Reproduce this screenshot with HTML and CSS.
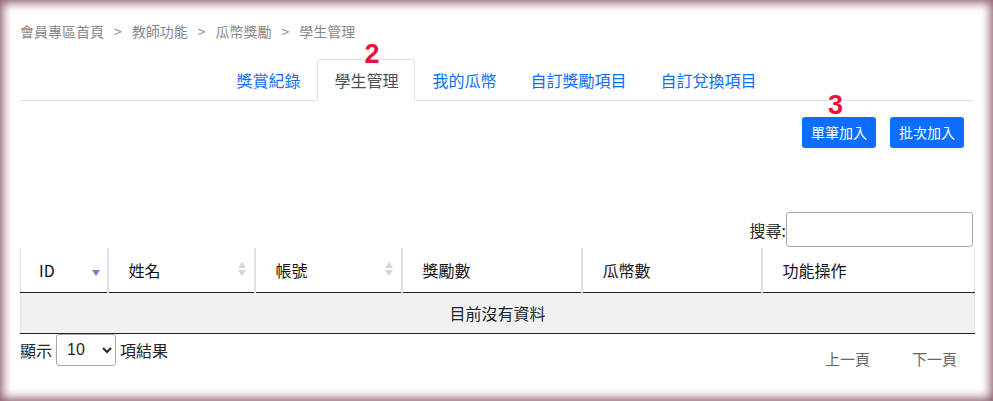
FILE: index.html
```html
<!DOCTYPE html>
<html lang="zh-Hant">
<head>
    <meta charset="UTF-8">
    <title>學生管理</title>
    <link rel="stylesheet" href="styles.css">
</head>
<body>

<div class="frame">
    <!-- Breadcrumb -->
    <div class="breadcrumb">
        <span>會員專區首頁</span><span class="sep">&gt;</span>
        <span>教師功能</span><span class="sep">&gt;</span>
        <span>瓜幣獎勵</span><span class="sep">&gt;</span>
        <span>學生管理</span>
    </div>

    <!-- Tabs -->
    <div class="tabs">
        <a class="tab">獎賞紀錄</a>
        <a class="tab active">學生管理<span class="mark mark-2">2</span></a>
        <a class="tab">我的瓜幣</a>
        <a class="tab">自訂獎勵項目</a>
        <a class="tab">自訂兌換項目</a>
    </div>

    <div class="actions">
        <button class="btn">單筆加入<span class="mark mark-3">3</span></button>
        <button class="btn">批次加入</button>
    </div>

    <!-- Search -->
    <div class="search">
        <label>搜尋:</label>
        <input type="text">
    </div>

    <table class="grid">
        <thead>
            <tr>
                <th class="c-id sort-desc">ID</th>
                <th class="c-name sortable">姓名</th>
                <th class="c-acc sortable">帳號</th>
                <th class="c-reward">獎勵數</th>
                <th class="c-coin">瓜幣數</th>
                <th class="c-op">功能操作</th>
            </tr>
        </thead>
        <tbody>
            <tr>
                <td colspan="6" class="empty">目前沒有資料</td>
            </tr>
        </tbody>
    </table>

    <div class="footer">
        <div class="length">
            顯示
            <select>
                <option>10</option>
                <option>25</option>
                <option>50</option>
            </select>
            項結果
        </div>
        <div class="pager">
            <span>上一頁</span>
            <span>下一頁</span>
        </div>
    </div>
</div>

</body>
</html>
```

FILE: styles.css
```css
body {
    margin: 0;
    padding: 0;
    font-family: "Noto Sans CJK TC", "Liberation Sans", sans-serif;
    color: #212529;
    background: #fff;
}
.frame {
    height: 401px;
    box-sizing: border-box;
    padding: 21px 18px 0 20px;
    box-shadow: inset 0 0 10px 3px rgba(110, 45, 70, 0.75);
    overflow: hidden;
}
.breadcrumb {
    font-size: 14px;
    line-height: 20px;
    color: #888;
    display: flex;
}
.breadcrumb .sep {
    padding: 0 10px;
}
.tabs {
    margin-top: 18px;
    display: flex;
    justify-content: center;
    border-bottom: 1px solid #dee2e6;
    margin-right: 2px;
}
.tab {
    position: relative;
    font-size: 16px;
    line-height: 24px;
    padding: 8px 16px;
    color: #0d6efd;
    border: 1px solid transparent;
    border-radius: 4px 4px 0 0;
    margin-bottom: -1px;
}
.tab.active {
    color: #495057;
    border-color: #dee2e6 #dee2e6 #fff;
    background: #fff;
}
.mark {
    position: absolute;
    font-family: "Liberation Sans", sans-serif;
    font-weight: bold;
    font-size: 27px;
    line-height: 26px;
    color: #f0103c;
}
.mark-2 {
    left: 46px;
    top: -19px;
}
.mark-3 {
    left: 26px;
    top: -25px;
}
.actions {
    margin-top: 16px;
    display: flex;
    justify-content: flex-end;
    gap: 14px;
    padding-right: 11px;
}
.btn {
    position: relative;
    background: #0d6efd;
    color: #fff;
    border: none;
    border-radius: 3px;
    font-family: inherit;
    font-size: 14px;
    line-height: 21px;
    padding: 5px 9px;
    width: 74px;
}
.search {
    margin-top: 64px;
    display: flex;
    justify-content: flex-end;
    align-items: center;
    font-size: 16px;
    padding-right: 2px;
}
.search input {
    width: 187px;
    height: 35px;
    box-sizing: border-box;
    border: 1px solid #aaa;
    border-radius: 3px;
    margin: 0;
}
.grid {
    width: 955px;
    border-collapse: collapse;
    margin-top: 1px;
    font-size: 16px;
}
.grid th {
    text-align: left;
    font-weight: 400;
    color: #111;
    height: 44px;
    padding: 0 18px 0 20px;
    border-left: 2px solid #dee2e6;
    border-bottom: 1px solid #222;
    position: relative;
    box-sizing: border-box;
}
.grid th:first-child {
    padding-left: 18px;
    border-left: 1px solid #dee2e6;
}
.grid th:last-child {
    border-right: 1px solid #dee2e6;
}
.c-id { width: 87px; }
.c-name { width: 147px; }
.c-acc { width: 147px; }
.c-reward { width: 180px; }
.c-coin { width: 180px; }
.sort-desc::after {
    content: "";
    position: absolute;
    right: 7px;
    top: 22px;
    border-left: 4px solid transparent;
    border-right: 4px solid transparent;
    border-top: 6px solid #7a7ad8;
}
.sortable::before,
.sortable::after {
    content: "";
    position: absolute;
    right: 8px;
    border-left: 4px solid transparent;
    border-right: 4px solid transparent;
}
.sortable::before {
    top: 14px;
    border-bottom: 6px solid #d6d6d6;
}
.sortable::after {
    top: 22px;
    border-top: 6px solid #d6d6d6;
}
.grid td.empty {
    background: #f1f1f1;
    text-align: center;
    height: 40px;
    padding: 0;
    border-left: 1px solid #dee2e6;
    border-right: 1px solid #dee2e6;
    border-bottom: 1px solid #222;
}
.footer {
    display: flex;
    justify-content: space-between;
    align-items: flex-start;
    font-size: 16px;
}
.length {
    display: flex;
    align-items: center;
    gap: 4px;
    line-height: 32px;
}
.length select {
    width: 60px;
    height: 32px;
    border: 1px solid #aaa;
    border-radius: 3px;
    font-family: "Liberation Sans", sans-serif;
    font-size: 16px;
    padding: 0 6px;
    background: #fff;
    color: #212529;
}
.pager {
    display: flex;
    gap: 6px;
    margin-top: 14px;
    color: #666;
    font-size: 15px;
    line-height: 22px;
}
.pager span {
    padding: 0 18px;
}
```
